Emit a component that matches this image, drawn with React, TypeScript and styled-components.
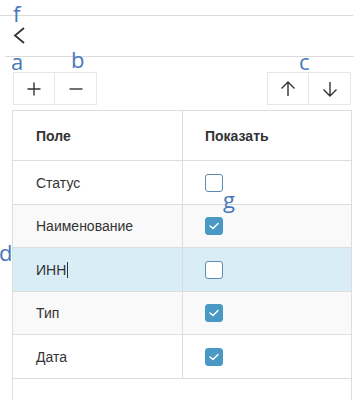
import React from "react";
import styled, { createGlobalStyle } from "styled-components";

const Global = createGlobalStyle`
  html, body { margin: 0; padding: 0; background: #fff; }
  body { font-family: "Liberation Sans", Arial, sans-serif; color: #333; }
`;

const Page = styled.div`
  position: relative;
  width: 364px;
  height: 400px;
  overflow: hidden;
`;

const TopRule = styled.div`
  margin-top: 15px;
  width: 353px;
  border-top: 1px solid #dcdcdc;
`;

const NavBar = styled.div`
  margin-left: 5px;
  width: 349px;
  height: 41px;
  border-bottom: 1px solid #dcdcdc;
  display: flex;
  align-items: center;
  padding-left: 8px;
  box-sizing: border-box;
`;

const Toolbar = styled.div`
  display: flex;
  justify-content: space-between;
  padding: 15px 13px 0 13px;
`;

const Group = styled.div`
  display: flex;
`;

const ToolButton = styled.button`
  width: 42px;
  height: 33px;
  box-sizing: border-box;
  border: 1px solid #e6e6e6;
  background: #fff;
  display: flex;
  align-items: center;
  justify-content: center;
  padding: 0;
  & + & { border-left: none; }
`;

const Table = styled.div`
  margin: 5px 0 0 12px;
  width: 340px;
  box-sizing: border-box;
  border: 1px solid #dddddd;
  border-bottom: none;
`;

const Row = styled.div<{ $bg?: string; $h: number }>`
  display: grid;
  grid-template-columns: 169px 1fr;
  height: ${(p) => p.$h}px;
  background: ${(p) => p.$bg || "#fff"};
  border-bottom: 1px solid #dddddd;
  box-sizing: border-box;
`;

const Cell = styled.div<{ $bold?: boolean }>`
  display: flex;
  align-items: center;
  padding-left: 23px;
  font-size: 14px;
  font-weight: ${(p) => (p.$bold ? 700 : 400)};
  color: #333;
  & + & { border-left: 1px solid #dddddd; padding-left: 22px; }
`;

const Caret = styled.span`
  display: inline-block;
  width: 1px;
  height: 16px;
  background: #333;
  margin-left: 1px;
`;

const Box = styled.span<{ $checked?: boolean }>`
  width: 18px;
  height: 18px;
  box-sizing: border-box;
  border-radius: 3px;
  border: 1px solid ${(p) => (p.$checked ? "#4a99c4" : "#5f8cb3")};
  background: ${(p) => (p.$checked ? "#4a99c4" : "#fff")};
  display: flex;
  align-items: center;
  justify-content: center;
`;

const Footer = styled.div`
  height: 30px;
`;

const Label = styled.span<{ $x: number; $y: number }>`
  position: absolute;
  left: ${(p) => p.$x}px;
  top: ${(p) => p.$y}px;
  font-family: "Open Sans", sans-serif;
  font-size: 22px;
  line-height: 1.2;
  color: #4678b8;
`;

const Check = ({ checked }: { checked?: boolean }) => (
  <Box $checked={checked}>
    {checked && (
      <svg width="12" height="10" viewBox="0 0 12 10">
        <polyline points="2,5 5,7.5 10,2.5" fill="none" stroke="#fff" strokeWidth="1.5" strokeLinecap="round" strokeLinejoin="round" />
      </svg>
    )}
  </Box>
);

const rows: { name: string; checked: boolean; bg?: string; h: number; caret?: boolean }[] = [
  { name: "Статус", checked: false, h: 44 },
  { name: "Наименование", checked: true, bg: "#f9f9f9", h: 43 },
  { name: "ИНН", checked: false, bg: "#d9edf7", h: 44, caret: true },
  { name: "Тип", checked: true, bg: "#f9f9f9", h: 43 },
  { name: "Дата", checked: true, h: 44 },
];

export default function App() {
  return (
    <Page>
      <Global />
      <TopRule />
      <NavBar>
        <svg width="14" height="20" viewBox="0 0 14 20">
          <polyline points="11,2 2,9.5 11,17" fill="none" stroke="#333" strokeWidth="1.8" />
        </svg>
      </NavBar>
      <Toolbar>
        <Group>
          <ToolButton>
            <svg width="14" height="14" viewBox="0 0 14 14">
              <path d="M7 0.5V13.5M0.5 7H13.5" stroke="#333" strokeWidth="1.4" fill="none" />
            </svg>
          </ToolButton>
          <ToolButton>
            <svg width="14" height="14" viewBox="0 0 14 14">
              <path d="M0.5 7H13.5" stroke="#333" strokeWidth="1.4" fill="none" />
            </svg>
          </ToolButton>
        </Group>
        <Group>
          <ToolButton>
            <svg width="16" height="16" viewBox="0 0 16 16">
              <path d="M8 1V15M1.5 7.5L8 1L14.5 7.5" stroke="#333" strokeWidth="1.4" fill="none" />
            </svg>
          </ToolButton>
          <ToolButton>
            <svg width="16" height="16" viewBox="0 0 16 16">
              <path d="M8 1V15M1.5 8.5L8 15L14.5 8.5" stroke="#333" strokeWidth="1.4" fill="none" />
            </svg>
          </ToolButton>
        </Group>
      </Toolbar>
      <Table>
        <Row $h={50}>
          <Cell $bold>Поле</Cell>
          <Cell $bold>Показать</Cell>
        </Row>
        {rows.map((r) => (
          <Row key={r.name} $bg={r.bg} $h={r.h}>
            <Cell>
              {r.name}
              {r.caret && <Caret />}
            </Cell>
            <Cell>
              <Check checked={r.checked} />
            </Cell>
          </Row>
        ))}
        <Footer />
      </Table>
      <Label $x={13} $y={0}>f</Label>
      <Label $x={11} $y={48}>a</Label>
      <Label $x={71} $y={46}>b</Label>
      <Label $x={299} $y={48}>c</Label>
      <Label $x={-1} $y={239}>d</Label>
      <Label $x={223} $y={186}>g</Label>
    </Page>
  );
}
